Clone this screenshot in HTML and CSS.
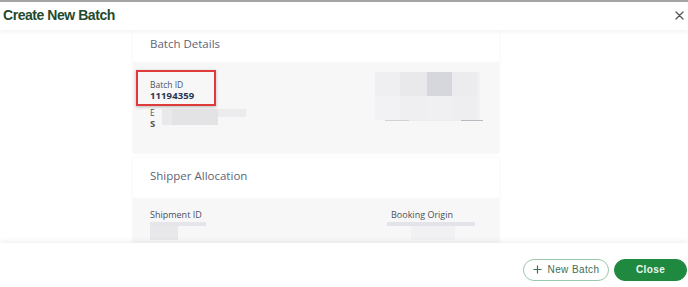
FILE: index.html
```html
<!DOCTYPE html>
<html>
<head>
<meta charset="utf-8">
<link rel="stylesheet" href="styles.css">
</head>
<body>
<div class="modal">
  <header class="topbar">
    <h1 class="title">Create New Batch</h1>
    <button class="close-x" aria-label="Close">
      <svg width="9" height="9" viewBox="0 0 9 9"><path d="M1 1L8 8M8 1L1 8" stroke="#555" stroke-width="1.3" stroke-linecap="round"/></svg>
    </button>
  </header>
  <main class="content">
    <div class="card">
      <section class="section">
        <div class="section-head">Batch Details</div>
        <div class="section-body details">
          <div class="col">
            <div class="field highlight">
              <div class="label">Batch ID</div>
              <div class="value">11194359</div>
            </div>
            <div class="field blurred">
              <div class="label">E</div>
              <div class="value">S</div>
              <span class="blur b1"></span>
              <span class="blur b2"></span>
              <span class="blur b3"></span>
            </div>
          </div>
          <div class="col right">
            <div class="blur-block">
              <span class="bb c1"></span>
              <span class="bb c2"></span>
              <span class="bb c3"></span>
              <span class="bb c4"></span>
              <span class="bb c5"></span>
              <span class="bb c6"></span>
              <span class="bb c7"></span>
              <span class="bb c8"></span>
            </div>
            <div class="under-line"></div>
          </div>
        </div>
      </section>
      <section class="section">
        <div class="section-head tall">Shipper Allocation</div>
        <div class="section-body alloc">
          <div class="col">
            <div class="label dark">Shipment ID</div>
            <div class="ship-blur">
              <span class="sb1"></span>
              <span class="sb2"></span>
            </div>
          </div>
          <div class="col origin">
            <div class="label dark">Booking Origin</div>
            <div class="origin-blur">
              <span class="ob1"></span>
              <span class="ob2"></span>
            </div>
          </div>
        </div>
      </section>
    </div>
  </main>
  <footer class="footer">
    <button class="btn outline">
      <svg width="9" height="9" viewBox="0 0 9 9"><path d="M4.5 0.5V8.5M0.5 4.5H8.5" stroke="#3d6f55" stroke-width="1.2"/></svg>
      <span>New Batch</span>
    </button>
    <button class="btn solid">Close</button>
  </footer>
</div>
</body>
</html>
```

FILE: styles.css
```css
* { box-sizing: border-box; }
html, body {
  margin: 0;
  padding: 0;
  width: 688px;
  height: 287px;
  overflow: hidden;
  background: #ffffff;
  font-family: "Open Sans", "Liberation Sans", sans-serif;
}
.modal {
  display: flex;
  flex-direction: column;
  height: 287px;
  border-top: 2px solid #a3a3a3;
}
.topbar {
  height: 28px;
  display: flex;
  align-items: center;
  justify-content: space-between;
  padding: 0 4px 3px 3px;
  position: relative;
  z-index: 2;
  background: #fff;
  box-shadow: 0 2px 4px rgba(0,0,0,0.05);
}
.title {
  margin: 0;
  font-family: "Liberation Sans", sans-serif;
  font-weight: 700;
  font-size: 14px;
  color: #1f4a2e;
  letter-spacing: -0.45px;
}
.close-x {
  border: 0;
  background: none;
  padding: 0;
  display: flex;
  margin-top: 1px;
}
.content {
  flex: 1;
  overflow: hidden;
  padding-left: 133px;
}
.card {
  width: 366px;
  display: flex;
  flex-direction: column;
  gap: 5px;
}
.section {
  box-shadow: 0 0 3px rgba(0,0,0,0.06);
}
.section-head {
  height: 30px;
  padding-left: 17px;
  padding-bottom: 3px;
  display: flex;
  align-items: center;
  background: #fff;
  font-size: 11.5px;
  color: #5d6577;
}
.section-head.tall {
  height: 38px;
  padding-bottom: 3px;
}
.section-body {
  background: #f7f7f8;
  display: flex;
  padding-left: 17px;
}
.details {
  height: 91px;
  margin-top: 2px;
  padding-top: 8px;
}
.col { display: flex; flex-direction: column; }
.details .col:first-child { width: 225px; }
.field { position: relative; }
.highlight {
  margin-left: -14px;
  width: 80px;
  height: 36px;
  padding: 8px 0 0 12px;
  border: 2px solid #e03b3b;
  box-shadow: 0 1px 3px rgba(0,0,0,0.25);
  background: #f7f7f8;
}
.label {
  font-size: 8.5px;
  color: #4d5566;
  line-height: 10px;
}
.label.dark { color: #4a4f5a; font-size: 9px; }
.value {
  font-size: 9.5px;
  font-weight: 700;
  color: #283550;
  line-height: 12px;
  letter-spacing: 0.1px;
}
.blurred {
  margin-top: 1px;
  height: 20px;
  padding-top: 1px;
}
.blurred .label, .blurred .value { color: #555; }
.blur { position: absolute; display: block; }
.b1 { left: 12px; top: 2px; width: 34px; height: 16px; background: #e9e9eb; }
.b2 { left: 22px; top: 2px; width: 46px; height: 16px; background: #e3e3e6; }
.b3 { left: 68px; top: 2px; width: 28px; height: 8px; background: #ececee; }
.right { padding-top: 2px; }
.blur-block {
  position: relative;
  width: 105px;
  height: 48px;
  background: #f1f1f3;
}
.bb { position: absolute; display: block; }
.c1 { left: 0; top: 0; width: 25px; height: 24px; background: #efeff1; }
.c2 { left: 25px; top: 0; width: 27px; height: 24px; background: #e9e9ec; }
.c3 { left: 52px; top: 0; width: 25px; height: 24px; background: #d6d7dd; }
.c4 { left: 77px; top: 0; width: 25px; height: 24px; background: #ececee; }
.c5 { left: 0; top: 24px; width: 25px; height: 24px; background: #f2f2f4; }
.c6 { left: 25px; top: 24px; width: 27px; height: 24px; background: #efeff1; }
.c7 { left: 52px; top: 24px; width: 25px; height: 24px; background: #f0f0f2; }
.c8 { left: 77px; top: 24px; width: 25px; height: 24px; background: #eeeef0; }
.under-line {
  width: 98px;
  height: 1px;
  margin-left: 10px;
  background: linear-gradient(90deg, #d2d3d8 0 25%, #ececef 25% 78%, #b9bac0 78%);
}
.alloc {
  height: 60px;
  margin-top: 2px;
  padding-top: 12px;
}
.alloc .col:first-child { width: 241px; }
.ship-blur, .origin-blur { position: relative; height: 22px; margin-top: 1px; }
.ship-blur span, .origin-blur span { position: absolute; display: block; }
.sb1 { left: 0; top: 1px; width: 56px; height: 4px; background: #e6e6ea; }
.sb2 { left: 0; top: 5px; width: 28px; height: 14px; background: #e8e8eb; }
.ob1 { left: -4px; top: 1px; width: 88px; height: 4px; background: #e3e3ea; }
.ob2 { left: 20px; top: 5px; width: 44px; height: 14px; background: #f1f1f3; }
.footer {
  height: 44px;
  display: flex;
  align-items: center;
  justify-content: flex-end;
  gap: 5px;
  padding: 9px 1px 0 0;
  position: relative;
  z-index: 2;
  background: #fff;
  box-shadow: 0 -2px 5px rgba(0,0,0,0.06);
}
.btn {
  height: 22px;
  border-radius: 11px;
  font-family: "Liberation Sans", sans-serif;
  font-size: 10px;
  font-weight: 700;
  letter-spacing: 0.4px;
  display: flex;
  align-items: center;
  justify-content: center;
  gap: 6px;
  cursor: pointer;
}
.outline {
  width: 86px;
  background: #fff;
  border: 1px solid #9cc7ab;
  color: #3d6f55;
  font-weight: 400;
}
.solid {
  width: 73px;
  background: #1f8a3f;
  border: 1px solid #1f8a3f;
  color: #eef7f1;
}
```
